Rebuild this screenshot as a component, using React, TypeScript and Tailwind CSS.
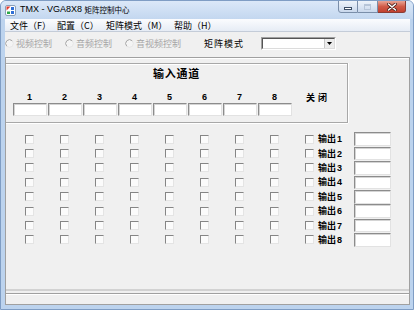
import React from "react";

const Check = () => (
  <div className="w-[9px] h-[9px] border border-t-[#858585] border-l-[#858585] border-b-[#e4e4e4] border-r-[#e4e4e4] bg-[#fbfbfb]" />
);

const Radio = () => (
  <svg width="9" height="9" viewBox="0 0 9 9" className="shrink-0">
    <circle cx="4.5" cy="4.5" r="3.8" fill="#f4f4f4" stroke="#e6e6e6" strokeWidth="1" />
    <path d="M1.8 7.2 A3.8 3.8 0 0 1 7.2 1.8" fill="none" stroke="#a9a9a9" strokeWidth="1" />
  </svg>
);

const AppIcon = () => (
  <svg width="11" height="11" viewBox="0 0 11 11">
    <rect x="0.5" y="0.5" width="10" height="10" rx="1.5" fill="#ffffff" stroke="#8aa0b8" />
    <path d="M1.5 1.5 H5.5 L1.5 5.5 Z" fill="#e23b2e" />
    <rect x="6" y="2" width="3" height="3" fill="#2f6fd6" />
    <rect x="2" y="6.5" width="3" height="2.5" fill="#2aa84a" />
    <rect x="6" y="6" width="3" height="3" fill="#2f6fd6" />
  </svg>
);

const rows = [1, 2, 3, 4, 5, 6, 7, 8];

export default function App() {
  return (
    <div className="w-[414px] h-[310px] flex flex-col bg-[#bcd3ee] border border-[#7f9dc4] rounded-t-[6px] overflow-hidden relative font-['Liberation_Sans','Noto_Sans_CJK_SC',sans-serif] text-black">
      {/* title bar */}
      <div className="h-[18px] shrink-0 flex items-start bg-linear-to-b from-[#dbe8f8] to-[#c3d7ef]">
        <div className="ml-[4px] mt-[4px]">
          <AppIcon />
        </div>
        <div className="ml-[4px] mt-[4px] flex items-center leading-none whitespace-nowrap">
          <span className="text-[9px]">TMX - VGA8X8&nbsp;</span>
          <span className="text-[7.5px] font-['Noto_Sans_CJK_SC',sans-serif]">矩阵控制中心</span>
        </div>
      </div>
      {/* window controls */}
      <div className="absolute top-[-1px] right-[7px] flex">
        <div className="w-[20px] h-[13px] border border-[#7a8ea9] rounded-bl-[3px] bg-linear-to-b from-[#eef3fa] to-[#c9d8ec] flex items-end justify-center pb-[2px]">
          <div className="w-[8px] h-[3px] bg-white border border-[#3d4e66]" />
        </div>
        <div className="w-[20px] h-[13px] border-y border-r border-[#7a8ea9] bg-linear-to-b from-[#eef3fa] to-[#c9d8ec] flex items-center justify-center">
          <div className="w-[7px] h-[6px] border border-[#b7c5d8] border-t-2" />
        </div>
        <div className="w-[28px] h-[13px] border-y border-r border-[#8a3c34] rounded-br-[3px] bg-linear-to-b from-[#e8a597] via-[#d05b48] to-[#c2402f] flex items-center justify-center">
          <svg width="10" height="8" viewBox="0 0 10 8">
            <path d="M1.5 1 L8.5 7 M8.5 1 L1.5 7" stroke="#4a1f1a" strokeWidth="3" strokeLinecap="round" />
            <path d="M1.5 1 L8.5 7 M8.5 1 L1.5 7" stroke="#ffffff" strokeWidth="1.6" strokeLinecap="round" />
          </svg>
        </div>
      </div>

      {/* body */}
      <div className="flex-1 flex pl-[4px] pr-[3px] pb-[4px]">
        <div className="flex-1 flex flex-col bg-[#f0f0f0]">
          {/* menu bar */}
          <div className="h-[13px] shrink-0 flex items-center pl-[5px] border-b border-[#c4ccd8] bg-linear-to-b from-[#fbfcfe] to-[#e6ecf5] text-[9px] leading-none font-['Noto_Sans_CJK_SC',sans-serif] whitespace-nowrap">
            <div className="w-[47px]">文件（F）</div>
            <div className="w-[49px]">配置（C）</div>
            <div className="w-[68px]">矩阵模式（M）</div>
            <div>帮助（H）</div>
          </div>

          {/* radio row */}
          <div className="h-[25px] shrink-0 flex items-center pb-[3px] text-[9px] leading-none font-['Noto_Sans_CJK_SC',sans-serif] whitespace-nowrap">
            <div className="w-[60px] flex items-center">
              <Radio />
              <span className="ml-[2px] text-[#a6a6a6]">视频控制</span>
            </div>
            <div className="w-[60px] flex items-center">
              <Radio />
              <span className="ml-[2px] text-[#a6a6a6]">音频控制</span>
            </div>
            <div className="w-[79px] flex items-center">
              <Radio />
              <span className="ml-[2px] text-[#a6a6a6]">音视频控制</span>
            </div>
            <div className="w-[57px] tracking-[1px]">矩阵模式</div>
            <div className="w-[75px] h-[13px] border border-t-[#a0a0a0] border-l-[#a0a0a0] border-b-white border-r-white">
              <div className="w-full h-full border border-t-[#555555] border-l-[#555555] border-b-[#dcdcdc] border-r-[#dcdcdc] bg-white flex justify-end">
                <div className="w-[10px] h-full bg-[#ececec] border-l border-[#c8c8c8] flex items-center justify-center">
                  <svg width="5" height="3" viewBox="0 0 5 3">
                    <path d="M0 0 H5 L2.5 3 Z" fill="#000" />
                  </svg>
                </div>
              </div>
            </div>
          </div>

          {/* main panel */}
          <div className="flex-1 flex flex-col border border-[#a0a0a0] shadow-[inset_0_1px_0_#ffffff]">
            {/* group box */}
            <div className="mt-[5px] w-[342px] h-[60px] shrink-0 flex flex-col border-y border-r border-[#a8a8a8] shadow-[inset_0_1px_0_#ffffff,0_1px_0_#ffffff,1px_0_0_#ffffff] font-['Noto_Sans_CJK_SC',sans-serif] font-bold">
              <div className="h-[18px] flex items-center justify-center text-[11px] tracking-[0.7px] leading-none">输入通道</div>
              <div className="mt-[9px] h-[12px] flex items-center pl-[6px] text-[9px] leading-none">
                {rows.map((n) => (
                  <div key={n} className="w-[35px] text-center font-['Liberation_Sans',sans-serif] font-bold">
                    {n}
                  </div>
                ))}
                <div className="ml-[14px] tracking-[3px]">关闭</div>
              </div>
              <div className="h-[13px] flex pl-[6px]">
                {rows.map((n) => (
                  <div key={n} className="w-[35px] pl-[1px]">
                    <div className="w-[34px] h-[13px] border border-t-[#8c8c8c] border-l-[#8c8c8c] border-b-[#e2e2e2] border-r-[#e2e2e2] bg-white shadow-[inset_1px_1px_0_#d4d4d4]" />
                  </div>
                ))}
              </div>
            </div>

            {/* checkbox matrix */}
            <div className="mt-[9px] flex flex-col">
              {rows.map((r) => (
                <div key={r} className="h-[14.4px] flex items-center pl-[6px]">
                  {rows.map((c) => (
                    <div key={c} className="w-[35px] flex justify-center">
                      <Check />
                    </div>
                  ))}
                  <div className="ml-[13px]">
                    <Check />
                  </div>
                  <div className="ml-[4px] w-[36px] text-[9px] leading-none font-bold font-['Noto_Sans_CJK_SC',sans-serif] whitespace-nowrap">
                    输出<span className="ml-[1px] font-['Liberation_Sans',sans-serif]">{r}</span>
                  </div>
                  <div className="w-[37px] h-[13.5px] border border-t-[#8c8c8c] border-l-[#8c8c8c] border-b-[#e2e2e2] border-r-[#e2e2e2] bg-white shadow-[inset_1px_1px_0_#d4d4d4]" />
                </div>
              ))}
            </div>

            <div className="flex-1" />

            {/* status area */}
            <div className="h-[2px] shrink-0 bg-[#d2d2d2]" />
            <div className="h-[2px] shrink-0" />
            <div className="h-[11px] shrink-0 border-t border-[#a0a0a0] shadow-[inset_0_1px_0_#ffffff]" />
          </div>
        </div>
      </div>
    </div>
  );
}
